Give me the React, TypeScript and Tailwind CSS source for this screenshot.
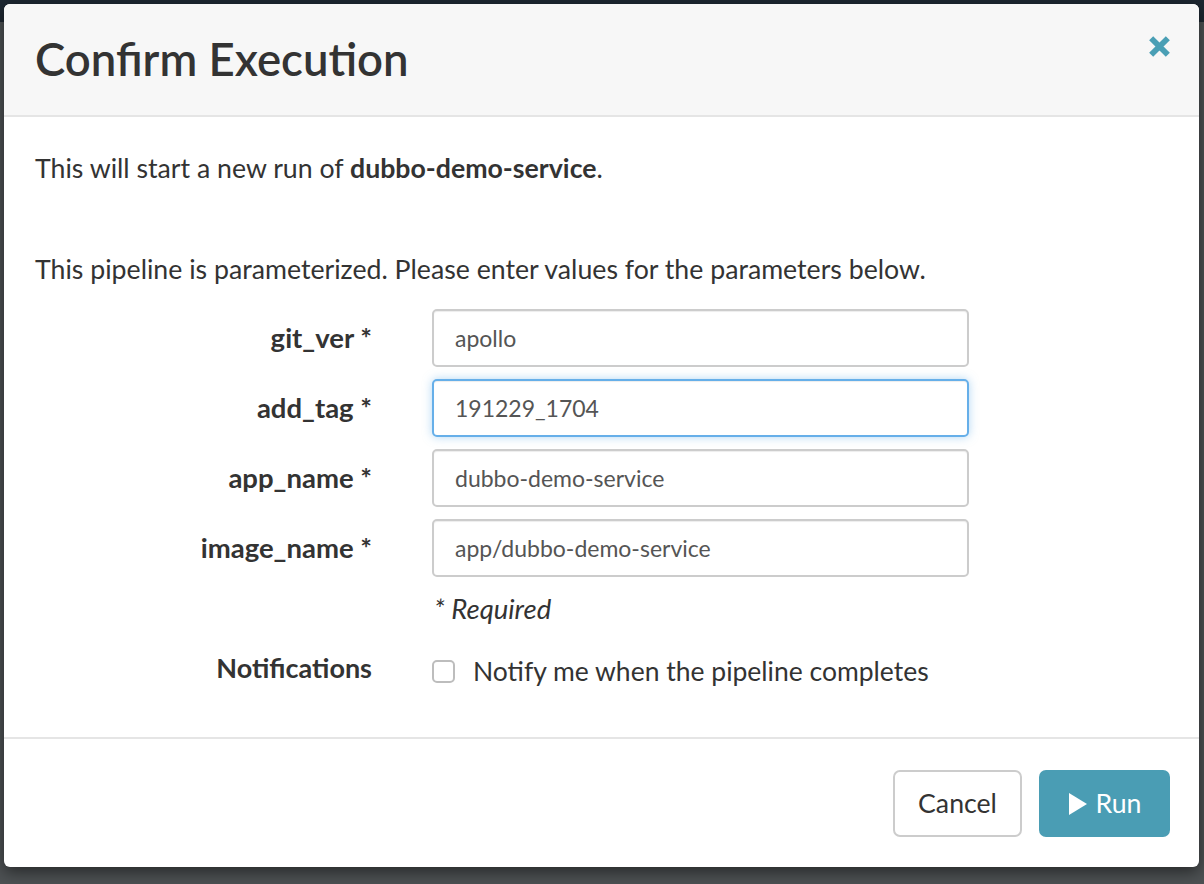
import React, { useState } from 'react';

const params = [
  { name: 'git_ver', value: 'apollo', focused: false },
  { name: 'add_tag', value: '191229_1704', focused: true },
  { name: 'app_name', value: 'dubbo-demo-service', focused: false },
  { name: 'image_name', value: 'app/dubbo-demo-service', focused: false },
];

export default function App() {
  const [notify, setNotify] = useState(false);

  return (
    <div className="relative w-full h-[884px] overflow-hidden bg-[#4d5153] text-[#333]" style={{ fontFamily: 'Lato, "Open Sans", sans-serif' }}>
      {/* faux page behind the backdrop */}
      <div className="h-[22px] bg-[#1d2731]" />

      {/* modal */}
      <div className="absolute left-[4px] top-[4px] w-[1195px] h-[863px] bg-white rounded-[6px] shadow-[0_5px_15px_rgba(0,0,0,0.5)] flex flex-col overflow-hidden">
        <div className="h-[113px] bg-[#f7f7f7] border-b-2 border-[#e5e5e5] flex items-center justify-between pl-[31px] pr-[27px]">
          <h1 className="text-[45.5px] font-semibold leading-none text-[#333] pb-[2px]">Confirm Execution</h1>
          <button className="self-start mt-[30px] text-[#4a9fb5]">
            <svg width="25" height="25" viewBox="0 0 24 24">
              <path d="M4 4 L20 20 M20 4 L4 20" stroke="currentColor" strokeWidth="5.5" strokeLinecap="butt" />
            </svg>
          </button>
        </div>

        <div className="h-[620px] pl-[31px] pr-[31px] pt-[33px] text-[26.7px]">
          <p className="leading-[36px]">
            This will start a new run of <b>dubbo-demo-service</b>.
          </p>
          <p className="leading-[36px] mt-[65px]">
            This pipeline is parameterized. Please enter values for the parameters below.
          </p>

          <div className="mt-[22px] flex flex-col gap-[12px]">
            {params.map(p => (
              <div key={p.name} className="flex items-center">
                <label className="w-[337px] text-right font-bold text-[27.5px]">{p.name} *</label>
                <input
                  defaultValue={p.value}
                  className={`ml-[60px] w-[537px] h-[58px] rounded-[5px] border-2 bg-white px-[21px] text-[23px] text-[#555] outline-none ${
                    p.focused
                      ? 'border-[#66afe9] shadow-[inset_0_1px_1px_rgba(0,0,0,0.075),0_0_10px_rgba(102,175,233,0.5)]'
                      : 'border-[#ccc] shadow-[inset_0_1px_1px_rgba(0,0,0,0.075)]'
                  }`}
                />
              </div>
            ))}
          </div>

          <p className="mt-[16px] ml-[399px] leading-[32px] italic text-[27.5px]">* Required</p>

          <div className="mt-[27px] flex items-center">
            <span className="w-[337px] text-right font-bold text-[27px] -mt-[8px]">Notifications</span>
            <label className="ml-[60px] flex items-center gap-[18px] text-[26.5px] cursor-pointer">
              <span
                onClick={() => setNotify(!notify)}
                className={`w-[23px] h-[23px] rounded-[5px] border-2 border-[#bdbdbd] ${notify ? 'bg-[#4a9db4]' : 'bg-white'}`}
              />
              Notify me when the pipeline completes
            </label>
          </div>
        </div>

        <div className="border-t-2 border-[#e5e5e5] flex-1 flex items-start justify-end gap-[17px] pt-[31px] pr-[29px]">
          <button className="w-[129px] h-[67px] rounded-[7px] border-2 border-[#ccc] bg-white text-[26.7px] text-[#333]">
            Cancel
          </button>
          <button className="w-[131px] h-[67px] rounded-[7px] bg-[#4a9db4] text-white text-[26.7px] flex items-center justify-center gap-[8px]">
            <svg width="20" height="24" viewBox="0 0 20 24">
              <path d="M1 1 L19 12 L1 23 Z" fill="white" />
            </svg>
            Run
          </button>
        </div>
      </div>
    </div>
  );
}
